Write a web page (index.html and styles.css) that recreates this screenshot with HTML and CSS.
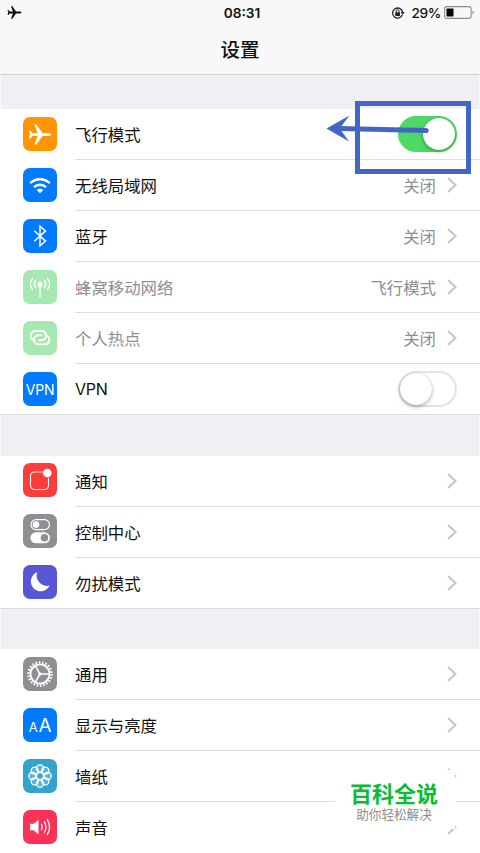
FILE: index.html
```html
<!DOCTYPE html>
<html lang="zh-CN">
<head>
<meta charset="utf-8">
<title>设置</title>
<link rel="stylesheet" href="styles.css">
</head>
<body>
<svg class="defs" width="0" height="0">
  <defs>
    <symbol id="plane" viewBox="0 0 24 24"><path d="M23 12c0-.9-1.100-1.500-2.500-1.500h-6L8.500 2H6.300l3.200 8.500H4.300L2.300 8H.9L2 12 .9 16h1.400l2-2.500h5.200L6.300 22h2.200l6-8.500h6c1.400 0 2.500-.6 2.500-1.500z" fill="currentColor"/></symbol>
    <symbol id="chevron" viewBox="0 0 10 16"><path d="M1 1l7.500 7L1 15" fill="none" stroke="#c4c4c9" stroke-width="2"/></symbol>
  </defs>
</svg>
<div class="screen">
  <header class="header">
    <div class="status">
      <svg class="status-plane"><use href="#plane"/></svg>
      <span class="time">08:31</span>
      <div class="status-right">
        <svg class="lock" viewBox="0 0 14 14"><path d="M11.300 8.800A5 5 0 1 1 11.500 6" fill="none" stroke="#222" stroke-width="1.300"/><path d="M9.700 6h4l-2 2.800z" fill="#222"/><rect x="4.200" y="6.200" width="4.800" height="3.800" rx=".4" fill="#222"/><path d="M5.200 6.500V5.200a1.400 1.400 0 0 1 2.800 0v1.300" fill="none" stroke="#222" stroke-width="1"/></svg>
        <span class="percent">29%</span>
        <svg class="battery" viewBox="0 0 31 13"><rect x=".6" y=".6" width="26.500" height="11.800" rx="2.500" fill="none" stroke="#8b8b8d" stroke-width="1.100"/><rect x="2.500" y="2.500" width="7" height="8" rx=".7" fill="#050505"/><path d="M28.700 4.500q2.200 2 0 4z" fill="#77777a"/></svg>
      </div>
    </div>
    <h1 class="title">设置</h1>
  </header>

  <section class="group">
    <div class="row">
      <div class="icon orange"><svg class="glyph-plane"><use href="#plane"/></svg></div>
      <div class="body"><span class="label">飞行模式</span><span class="toggle on"><i class="knob"></i></span></div>
    </div>
    <div class="row">
      <div class="icon blue"><svg viewBox="0 0 34 34"><g fill="none" stroke="#fff" stroke-width="2.500"><path d="M7.200 15.200a14 14 0 0 1 19.600 0"/><path d="M11 19.200a8.800 8.800 0 0 1 12 0"/></g><path d="M13.700 21.900a4.900 4.900 0 0 1 6.600 0L17 25.300z" fill="#fff"/></svg></div>
      <div class="body"><span class="label">无线局域网</span><span class="value">关闭</span><svg class="chevron"><use href="#chevron"/></svg></div>
    </div>
    <div class="row">
      <div class="icon blue"><svg viewBox="0 0 34 34"><path d="M11.300 11.800l11.200 10.300-5.500 4.700V7.200l5.500 4.700-11.200 10.300" fill="none" stroke="#fff" stroke-width="1.500"/></svg></div>
      <div class="body"><span class="label">蓝牙</span><span class="value">关闭</span><svg class="chevron"><use href="#chevron"/></svg></div>
    </div>
    <div class="row dim">
      <div class="icon green"><svg viewBox="0 0 34 34"><circle cx="17" cy="14" r="2.600" fill="#fff"/><g fill="none" stroke="#fff" stroke-width="1.500" stroke-linecap="round"><path d="M17 14v13"/><path d="M12.700 10.300a6 6 0 0 0 0 7.400M21.300 10.300a6 6 0 0 1 0 7.400M9.500 8.500a9 9 0 0 0 0 11M24.500 8.500a9 9 0 0 1 0 11"/></g></svg></div>
      <div class="body"><span class="label">蜂窝移动网络</span><span class="value">飞行模式</span><svg class="chevron"><use href="#chevron"/></svg></div>
    </div>
    <div class="row dim">
      <div class="icon green"><svg viewBox="0 0 34 34"><g fill="none" stroke="#fff" stroke-width="1.900" stroke-linecap="round"><path d="M11.700 19.300a4.700 4.700 0 0 1 .3-9.300h6.500a4.600 4.600 0 0 1 2.800 8.300 5 5 0 0 1-2.800.9h-2.300"/><path d="M22.300 14.100a4.700 4.700 0 0 1-.3 9.300h-6.500a4.600 4.600 0 0 1-2.800-8.300 5 5 0 0 1 2.800-.9h2.300"/></g></svg></div>
      <div class="body"><span class="label">个人热点</span><span class="value">关闭</span><svg class="chevron"><use href="#chevron"/></svg></div>
    </div>
    <div class="row">
      <div class="icon blue"><span class="vpn">VPN</span></div>
      <div class="body"><span class="label latin">VPN</span><span class="toggle"><i class="knob"></i></span></div>
    </div>
  </section>

  <section class="group alerts">
    <div class="row">
      <div class="icon red"><svg viewBox="0 0 34 34"><path d="M19.500 9h-8a4 4 0 0 0-4 4v9.500a4 4 0 0 0 4 4h10a4 4 0 0 0 4-4V15" fill="none" stroke="#fff" stroke-width="1.100"/><circle cx="24.300" cy="10" r="4.300" fill="#fff"/></svg></div>
      <div class="body"><span class="label">通知</span><svg class="chevron"><use href="#chevron"/></svg></div>
    </div>
    <div class="row">
      <div class="icon gray"><svg viewBox="0 0 34 34"><rect x="8" y="5.600" width="18.500" height="10" rx="5" fill="none" stroke="#fff" stroke-width="1.200"/><circle cx="13" cy="10.600" r="3.300" fill="#fff"/><rect x="7.400" y="18.300" width="19.600" height="11" rx="5.500" fill="#fff"/><circle cx="21.500" cy="23.800" r="3.800" fill="#8e8e93"/></svg></div>
      <div class="body"><span class="label">控制中心</span><svg class="chevron"><use href="#chevron"/></svg></div>
    </div>
    <div class="row">
      <div class="icon purple"><svg viewBox="0 0 34 34"><path d="M14.200 7.300A9.800 9.800 0 1 0 26.600 20.500 10.300 10.300 0 0 1 14.200 7.300z" fill="#fff"/></svg></div>
      <div class="body"><span class="label">勿扰模式</span><svg class="chevron"><use href="#chevron"/></svg></div>
    </div>
  </section>

  <section class="group general">
    <div class="row">
      <div class="icon gray"><svg viewBox="0 0 34 34"><g fill="none" stroke="#fff"><circle cx="17" cy="17" r="11.600" stroke-width="2.400" stroke-dasharray="1.656 1.656"/><circle cx="17" cy="17" r="9.600" stroke-width="1.900"/><path d="M17 17h9.500M17 17l-4.800-8.300M17 17l-4.800 8.300" stroke-width="1.500"/></g><circle cx="17" cy="17" r="1.800" fill="#fff"/></svg></div>
      <div class="body"><span class="label">通用</span><svg class="chevron"><use href="#chevron"/></svg></div>
    </div>
    <div class="row">
      <div class="icon blue"><span class="aa"><small>A</small>A</span></div>
      <div class="body"><span class="label">显示与亮度</span><svg class="chevron"><use href="#chevron"/></svg></div>
    </div>
    <div class="row">
      <div class="icon cyan"><svg viewBox="0 0 34 34"><g fill="#ffffff30" stroke="#fff" stroke-width="1.300"><circle cx="17" cy="9.300" r="3.500"/><circle cx="22.400" cy="11.600" r="3.500"/><circle cx="24.700" cy="17" r="3.500"/><circle cx="22.400" cy="22.400" r="3.500"/><circle cx="17" cy="24.700" r="3.500"/><circle cx="11.600" cy="22.400" r="3.500"/><circle cx="9.300" cy="17" r="3.500"/><circle cx="11.600" cy="11.600" r="3.500"/><circle cx="17" cy="17" r="3.700"/></g><circle cx="17" cy="17" r="1.700" fill="#34a4cf"/></svg></div>
      <div class="body"><span class="label">墙纸</span><svg class="chevron"><use href="#chevron"/></svg></div>
    </div>
    <div class="row">
      <div class="icon pink"><svg viewBox="0 0 34 34"><path d="M7 13.800h3.500l5-4v14.400l-5-4H7z" fill="#fff"/><g fill="none" stroke="#fff" stroke-width="1.300" stroke-linecap="round"><path d="M18.500 14.300a5.500 5.500 0 0 1 0 5.400M21.300 11.800a9.500 9.500 0 0 1 0 10.400M24.200 9.500a13 13 0 0 1 0 15"/></g></svg></div>
      <div class="body"><span class="label">声音</span><svg class="chevron"><use href="#chevron"/></svg></div>
    </div>
  </section>

  <svg class="annotation" viewBox="0 0 150 80"><rect x="33.500" y="5.500" width="111" height="68" fill="none" stroke="#4166c3" stroke-width="5"/><path d="M15 30.500L102 32.500" stroke="#4166c3" stroke-width="5" fill="none"/><circle cx="102" cy="32.500" r="2.600" fill="#4166c3"/><path d="M2.500 30.500L25.500 17.500 17.500 28v5l7.500 10.500z" fill="#4166c3"/></svg>
  <div class="watermark"><strong>百科全说</strong><span>助你轻松解决</span></div>
</div>
</body>
</html>
```
FILE: styles.css
```css
* { box-sizing: border-box; }
body {
  margin: 0;
  overflow: hidden;
  background: #fff;
  color: #111;
  font-family: "Liberation Sans", "Noto Sans CJK SC", sans-serif;
}
.defs { position: absolute; }
.screen {
  position: relative;
  height: 853px;
  overflow: hidden;
  background: #efeff4;
  box-shadow: inset 1px 0 #fafafc, inset -1px 0 #fafafc;
}
.header {
  height: 75px;
  background: #f8f8f8;
  border-bottom: 1px solid #d0d0d3;
  margin-bottom: 34px;
}
.status {
  display: grid;
  grid-template-columns: 1fr auto 1fr;
  align-items: center;
  height: 25px;
  padding: 0 6px 0 7px;
}
.status-plane { width: 15px; height: 15px; }
.time {
  font: 600 13.700px Inter, sans-serif;
  padding-left: 3px;
}
.status-right {
  display: flex;
  align-items: center;
  justify-content: flex-end;
}
.lock { width: 14px; height: 14px; margin-right: 7px; }
.percent { font: 500 13.700px Inter, sans-serif; letter-spacing: -.4px; margin-right: 3px; }
.battery { width: 31px; height: 13px; margin-right: -1px; }
.title {
  margin: 9px 0 0;
  text-align: center;
  font: 500 19.500px/29px "Noto Sans CJK SC", sans-serif;
}
.group {
  background: #fff;
  margin-bottom: 41px;
}
.alerts { margin-bottom: 40px; }
.row {
  display: flex;
  height: 51px;
  padding-left: 23px;
}
.group .row:last-child { border-bottom: 1px solid #dcdce0; }
.general .row:last-child { border-bottom-color: #fff; }
.icon {
  display: flex;
  align-items: center;
  justify-content: center;
  width: 34px;
  height: 34px;
  margin: 8px 18px 0 0;
  border-radius: 7px;
  color: #fff;
  flex: none;
}
.alerts .icon { margin-top: 7px; }
.icon svg { width: 34px; height: 34px; }
.icon .glyph-plane { width: 24px; height: 25px; }
.orange { background: #ff9500; }
.blue { background: #007aff; }
.green { background: #a5e9b0; }
.red { background: #fc3d39; }
.gray { background: #8e8e93; }
.purple { background: #5856d6; }
.cyan { background: #34a4cf; }
.pink { background: #fc3158; }
.body {
  display: flex;
  align-items: center;
  flex: 1;
  padding-right: 23px;
  border-bottom: 1px solid #dedee1;
}
.alerts .body { padding-bottom: 1px; }
.row:last-child .body { border-bottom: 0; }
.label {
  flex: 1;
  font: 400 16.400px/24px "Noto Sans CJK SC", sans-serif;
}
.latin { font-family: Inter, sans-serif; font-size: 16px; letter-spacing: -.3px; }
.dim .label { color: #8e8e93; }
.value {
  font: 400 16.400px/24px "Noto Sans CJK SC", sans-serif;
  color: #8e8e93;
  margin-right: 11px;
}
.chevron { width: 10px; height: 16px; }
.vpn { font: 400 14px Inter, sans-serif; letter-spacing: -.2px; }
.aa { font: 400 19px Inter, sans-serif; letter-spacing: -.3px; }
.aa small { font-size: 13px; margin-right: 1px; }
.toggle {
  width: 59px;
  height: 36px;
  border: 2px solid #e3e3e5;
  border-radius: 18px;
  display: flex;
}
.knob {
  width: 32px;
  height: 32px;
  border-radius: 50%;
  background: #fff;
  box-shadow: 0 2px 4px #0004, 0 0 1px #0004;
}
.on {
  background: #4cd964;
  border-color: #4cd964;
  justify-content: flex-end;
}
.annotation {
  position: absolute;
  left: 324px;
  top: 98px;
  width: 150px;
  height: 80px;
}
.watermark {
  position: absolute;
  left: 335px;
  top: 770px;
  width: 120px;
  height: 59px;
  display: flex;
  flex-direction: column;
  align-items: center;
  padding-right: 2px;
  background: #fff;
  font-family: "Noto Sans CJK SC", sans-serif;
  color: #8c8c8c;
}
.watermark strong {
  font-size: 22px;
  font-weight: 700;
  line-height: 26px;
  margin-top: 9px;
  color: #09bd31;
}
.watermark span { font-size: 12.600px; line-height: 16px; margin-top: 1px; }
```
